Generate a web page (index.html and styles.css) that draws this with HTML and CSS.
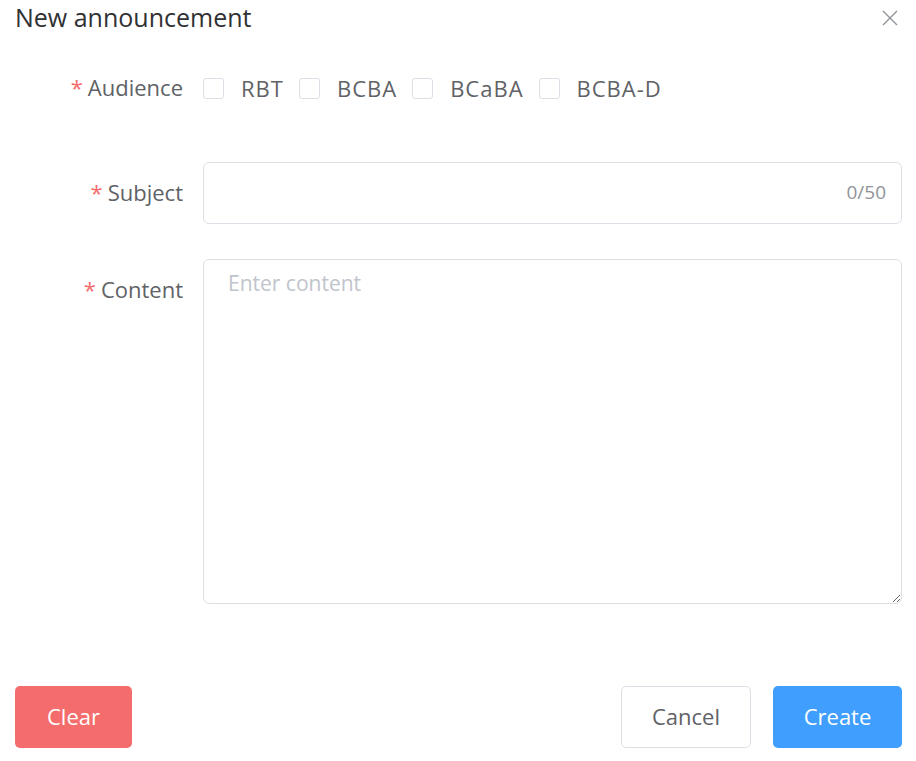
FILE: index.html
```html
<!DOCTYPE html>
<html lang="en">
<head>
    <meta charset="UTF-8">
    <meta name="viewport" content="width=device-width, initial-scale=1.0">
    <title>New announcement</title>
    <link rel="stylesheet" href="styles.css">
</head>
<body>
    <div class="dialog">
        <div class="dialog-header">
            <span class="dialog-title">New announcement</span>
            <button class="dialog-close" aria-label="Close">
                <svg width="16" height="16" viewBox="0 0 16 16">
                    <path d="M1 1 L15 15 M15 1 L1 15" stroke="#909399" stroke-width="1.4" fill="none"/>
                </svg>
            </button>
        </div>

        <form class="form">
            <div class="form-item">
                <label class="form-label required">Audience</label>
                <div class="form-content checks">
                    <label class="check"><span class="check-box"></span><span class="check-text">RBT</span></label>
                    <label class="check"><span class="check-box"></span><span class="check-text">BCBA</span></label>
                    <label class="check"><span class="check-box"></span><span class="check-text">BCaBA</span></label>
                    <label class="check"><span class="check-box"></span><span class="check-text">BCBA-D</span></label>
                </div>
            </div>

            <div class="form-item subject-item">
                <label class="form-label required">Subject</label>
                <div class="form-content input-wrap">
                    <input type="text" class="input">
                    <span class="counter">0/50</span>
                </div>
            </div>

            <div class="form-item content-item">
                <label class="form-label required">Content</label>
                <div class="form-content">
                    <textarea class="textarea" placeholder="Enter content"></textarea>
                </div>
            </div>
        </form>

        <div class="dialog-footer">
            <button class="btn btn-danger">Clear</button>
            <div class="footer-right">
                <button class="btn btn-default">Cancel</button>
                <button class="btn btn-primary">Create</button>
            </div>
        </div>
    </div>
</body>
</html>
```

FILE: styles.css
```css
body {
    margin: 0;
    background-color: #ffffff;
    font-family: "Open Sans", "Noto Sans", sans-serif;
    color: #606266;
}
.dialog {
    padding: 0 14px 0 15px;
}
.dialog-header {
    display: flex;
    justify-content: space-between;
    height: 32px;
}
.dialog-title {
    font-size: 25px;
    line-height: 34px;
    height: 32px;
    color: #303133;
}
.dialog-close {
    border: none;
    background: none;
    padding: 0;
    margin: 10px 4px 0 0;
    width: 16px;
    height: 16px;
    cursor: pointer;
}
.form-item {
    display: flex;
}
.form-label {
    width: 188px;
    flex-shrink: 0;
    padding-right: 20px;
    box-sizing: border-box;
    text-align: right;
    font-size: 22px;
    line-height: 60px;
    color: #606266;
}
.form-label.required::before {
    content: "*";
    color: #f56c6c;
    margin-right: 5px;
}
.form-content {
    flex: 1;
}
.form-item:first-child {
    margin-top: 25px;
}
.checks {
    display: flex;
    align-items: center;
    height: 62px;
}
.check {
    display: flex;
    align-items: center;
    margin-right: 15px;
    cursor: pointer;
}
.check-box {
    width: 19px;
    height: 19px;
    border: 1px solid #dcdfe6;
    border-radius: 3px;
}
.check-text {
    margin-left: 17px;
    font-size: 22px;
    letter-spacing: 1px;
    color: #606266;
}
.subject-item {
    margin-top: 43px;
}
.input-wrap {
    position: relative;
}
.input {
    width: 100%;
    height: 62px;
    box-sizing: border-box;
    border: 1px solid #dcdfe6;
    border-radius: 6px;
    padding: 0 80px 0 24px;
    font: inherit;
    font-size: 21px;
    color: #606266;
    outline: none;
}
.counter {
    position: absolute;
    right: 16px;
    top: 0;
    line-height: 60px;
    font-size: 19px;
    color: #909399;
}
.content-item {
    margin-top: 35px;
}
.textarea {
    display: block;
    width: 100%;
    height: 345px;
    box-sizing: border-box;
    border: 1px solid #dcdfe6;
    border-radius: 6px;
    padding: 8px 24px;
    font: inherit;
    font-size: 21px;
    line-height: 30px;
    color: #606266;
    outline: none;
    resize: vertical;
}
.textarea::placeholder {
    color: #c0c4cc;
}
.dialog-footer {
    display: flex;
    justify-content: space-between;
    margin-top: 82px;
}
.footer-right {
    display: flex;
    gap: 22px;
}
.btn {
    height: 62px;
    padding-bottom: 3px;
    border-radius: 5px;
    font-family: inherit;
    font-size: 22px;
    border: 1px solid transparent;
    cursor: pointer;
}
.btn-danger {
    width: 117px;
    background-color: #f56c6c;
    color: #ffffff;
}
.btn-default {
    width: 130px;
    background-color: #ffffff;
    border-color: #dcdfe6;
    color: #606266;
}
.btn-primary {
    width: 129px;
    background-color: #409eff;
    color: #ffffff;
}
```
